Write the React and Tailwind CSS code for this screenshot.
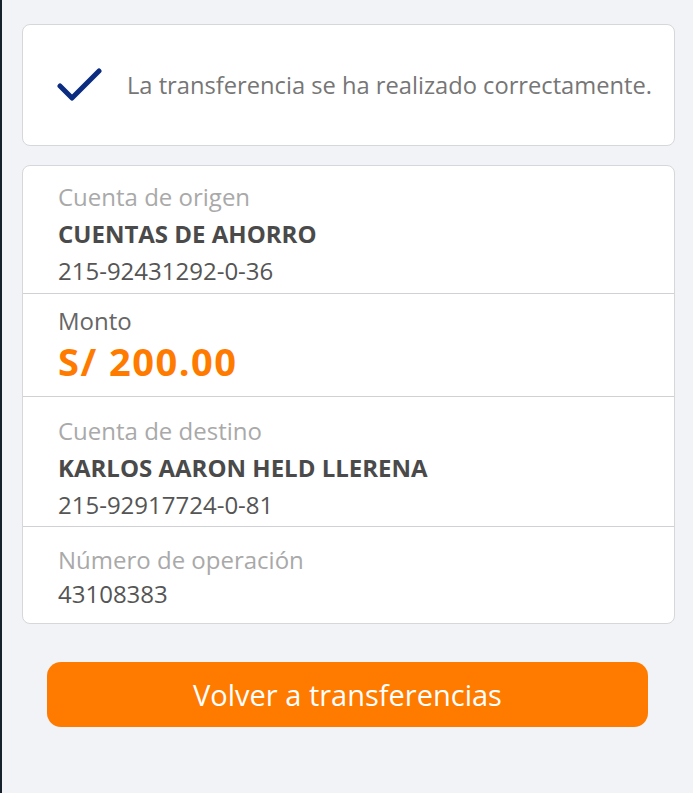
import React from "react";

const Section = ({ children, className = "", last = false }) => (
  <div className={`px-[35px] ${last ? "" : "border-b border-[#cfd1d5]"} ${className}`}>
    {children}
  </div>
);

const App = () => {
  return (
    <div
      className="min-h-[793px] w-full bg-[#f1f3f6] border-l-2 border-[#17212b] pl-[20px] pr-[18px] pt-[24px]"
      style={{ fontFamily: "'Open Sans', Roboto, sans-serif" }}
    >
      <div className="flex items-center gap-[22px] h-[122px] bg-white border border-[#d5d7db] rounded-[8px] pl-[34px]">
        <svg width="48" height="40" viewBox="0 0 48 40" className="shrink-0 mt-[6px]">
          <polyline
            points="3,18 15,30 42,3"
            fill="none"
            stroke="#0c2c80"
            strokeWidth="5"
            strokeLinecap="round"
            strokeLinejoin="round"
          />
        </svg>
        <p className="text-[23.7px] text-[#767676] mt-[2px] whitespace-nowrap">
          La transferencia se ha realizado correctamente.
        </p>
      </div>

      <div className="mt-[19px] bg-white border border-[#d5d7db] rounded-[8px] text-[24px] leading-[37px]">
        <Section className="pt-[12px] pb-[4px]">
          <p className="text-[#a9a9a9]">Cuenta de origen</p>
          <p className="font-bold text-[#4a4a4a]">CUENTAS DE AHORRO</p>
          <p className="text-[#555555]">215-92431292-0-36</p>
        </Section>
        <Section className="pt-[9px] pb-[13px]">
          <p className="text-[#666666] leading-[36px]">Monto</p>
          <p className="text-[38px] leading-[44px] font-bold tracking-[1.5px] text-[#ff7b00]">S/ 200.00</p>
        </Section>
        <Section className="pt-[15px] pb-[3px]">
          <p className="text-[#a9a9a9]">Cuenta de destino</p>
          <p className="font-bold text-[#4a4a4a]">KARLOS AARON HELD LLERENA</p>
          <p className="text-[#555555]">215-92917724-0-81</p>
        </Section>
        <Section last className="pt-[16px] pb-[12px] leading-[34px]">
          <p className="text-[#a9a9a9]">Número de operación</p>
          <p className="text-[#555555]">43108383</p>
        </Section>
      </div>

      <div className="pl-[25px] pr-[27px] mt-[38px]">
        <button className="w-full h-[65px] rounded-[14px] bg-[#ff7b00] text-white text-[29px]">
          Volver a transferencias
        </button>
      </div>
    </div>
  );
};

export default App;
